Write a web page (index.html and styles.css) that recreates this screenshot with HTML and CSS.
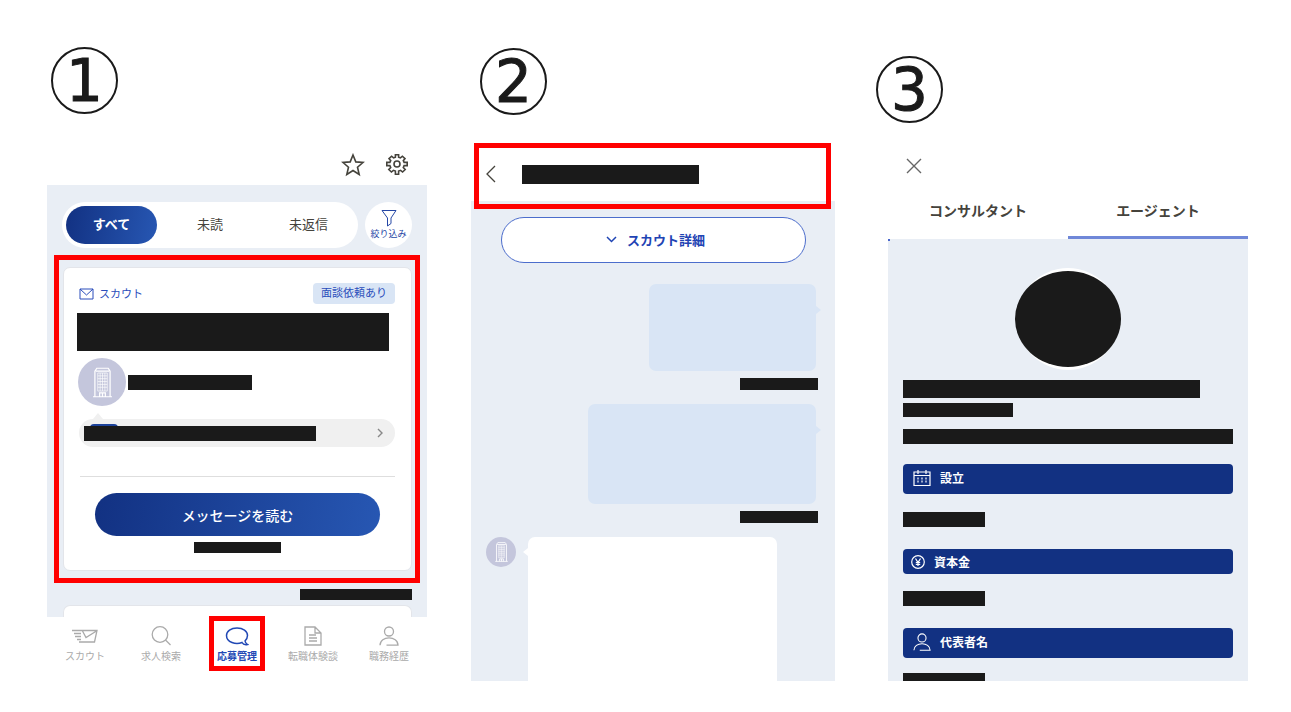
FILE: index.html
```html
<!DOCTYPE html>
<html lang="ja">
<head>
<meta charset="utf-8">
<meta name="viewport" content="width=device-width, initial-scale=1">
<title>応募管理</title>
<link rel="stylesheet" href="styles.css">
</head>
<body>
<svg class="defs" aria-hidden="true">
  <symbol id="building" viewBox="0 0 20 32">
    <path d="M2 31V4l2-3h12l2 3v27M0 31h20M3 4h14M7 31v-4h6v4M10 27v4" fill="none" stroke="#fff" stroke-width="1.300"/>
    <path d="M5 6v19M7.500 6v19M10 6v19M12.500 6v19M15 6v19M5 6h10M5 9h10M5 12h10M5 15h10M5 18h10M5 21h10M5 25h10" fill="none" stroke="#fff" stroke-width=".7"/>
  </symbol>
  <symbol id="person" viewBox="0 0 20 20">
    <circle cx="10" cy="5.500" r="4.500"/>
    <path d="M1 19.300C1 9.500 19 9.500 19 19.200H7.500"/>
  </symbol>
</svg>
<main class="steps">
  <section class="step step-list">
    <div class="number">1</div>
    <div class="toolbar">
      <button class="icon-button" aria-label="お気に入り"><svg width="24" height="24" viewBox="0 0 24 24"><path d="m12 2 2.800 6.900 7.200.6-5.500 4.700 1.700 7.300-6.200-4-6.200 4 1.700-7.300L2 9.500l7.200-.6z"/></svg></button>
      <button class="icon-button" aria-label="設定"><svg width="24" height="24" viewBox="0 0 24 24"><path d="M10.400 4.200V1.700h3.200v2.500l1.800.7 2-1.700 2.600 2.400-1.700 2.100.8 1.700h3.100v3.200h-3.100l-.8 1.900 1.900 2-2.600 2.500-2-1.700-2 .8v3.200h-3.200v-3.200l-2-.8-2 1.700-2.600-2.500 1.900-2-.8-1.900H1.800V9.400h3.100l.8-1.700L4 5.600l2.600-2.400 2 1.700z"/><circle cx="12" cy="11" r="3"/></svg></button>
    </div>
    <div class="list-body">
      <div class="filters">
        <div class="segments">
          <button class="segment segment-on">すべて</button>
          <button class="segment">未読</button>
          <button class="segment">未返信</button>
        </div>
        <button class="narrow"><svg width="18" height="18" viewBox="0 0 18 18"><path d="M2 1.500h14L11 9v5.500L7.500 17V9z"/></svg>絞り込み</button>
      </div>
      <div class="marked">
        <article class="card">
          <div class="card-head">
            <span class="kind"><svg width="15" height="12" viewBox="0 0 15 12"><path d="M1 1h13v10H1zM1 1l6.500 6L14 1"/></svg>スカウト</span>
            <span class="tag">面談依頼あり</span>
          </div>
          <div class="mask mask-title"></div>
          <div class="company">
            <span class="avatar avatar-large"><svg width="19" height="31"><use href="#building"/></svg></span>
            <span class="mask mask-name"></span>
          </div>
          <div class="preview">
            <span class="mask mask-preview"></span>
            <svg width="6" height="10" viewBox="0 0 6 10"><path d="m1 1 4 4-4 4"/></svg>
          </div>
          <button class="read">メッセージを読む</button>
          <div class="mask mask-date"></div>
        </article>
      </div>
      <div class="mask mask-stamp"></div>
      <div class="card-next"></div>
    </div>
    <nav class="tabs">
      <a class="tab" href="#"><svg width="28" height="20" viewBox="0 0 28 20"><path d="M10 4.500h16L23.500 16H8M11.500 5l3.500 6.500L25.500 5M1 4.500h9M3 7.500h7M4 10.500h6M6 13.500h4"/></svg>スカウト</a>
      <a class="tab" href="#"><svg width="20" height="20" viewBox="0 0 20 20"><circle cx="9" cy="8.500" r="7.800"/><path d="m14.500 14 5 5"/></svg>求人検索</a>
      <a class="tab tab-on" href="#"><svg width="24" height="20" viewBox="0 0 24 20"><path d="M17 16.500C11 19 1.500 16.500 1.500 9.500 1.500 5 6 2 12 2s10.500 3 10.500 7.500c0 2.500-1 4-2.500 5.500.2 1.500 1 2.500 2.500 3.500-2.500.5-4.500-.2-5.500-2z"/></svg>応募管理</a>
      <a class="tab" href="#"><svg width="18" height="20" viewBox="0 0 18 20"><path d="M1 1h10l6 6v12H1zM11 1v6h6M5 9h7M5 12h8M5 15h8"/></svg>転職体験談</a>
      <a class="tab" href="#"><svg width="20" height="20"><use href="#person"/></svg>職務経歴</a>
    </nav>
  </section>

  <section class="step step-chat">
    <div class="number">2</div>
    <header class="chat-head">
      <button class="icon-button" aria-label="戻る"><svg width="10" height="18" viewBox="0 0 10 18"><path d="M9 1 1 9l8 8"/></svg></button>
      <span class="mask mask-partner"></span>
    </header>
    <div class="chat-body">
      <button class="detail"><svg width="11" height="7" viewBox="0 0 11 7"><path d="m1 1 4.500 4.500L10 1"/></svg>スカウト詳細</button>
      <div class="bubble bubble-sent bubble-short"></div>
      <div class="mask mask-time"></div>
      <div class="bubble bubble-sent bubble-long"></div>
      <div class="mask mask-time"></div>
      <div class="received">
        <span class="avatar"><svg width="13" height="20"><use href="#building"/></svg></span>
        <div class="bubble bubble-received"></div>
      </div>
    </div>
  </section>

  <section class="step step-agent">
    <div class="number">3</div>
    <div class="agent-close"><button class="icon-button" aria-label="閉じる"><svg width="16" height="16" viewBox="0 0 16 16"><path d="m1 1 14 14M15 1 1 15"/></svg></button></div>
    <div class="agent-tabs">
      <button class="agent-tab">コンサルタント</button>
      <button class="agent-tab agent-tab-on">エージェント</button>
    </div>
    <div class="agent-body">
      <div class="portrait"><div class="portrait-mask"></div></div>
      <div class="mask mask-heading"></div>
      <div class="mask mask-subheading"></div>
      <div class="mask mask-intro"></div>
      <h2 class="fact"><svg width="18" height="18" viewBox="0 0 18 18"><path d="M1 3h16v13.500H1zM1 6.500h16M5 1v4M13 1v4"/><path d="M5 8.500v6M9 8.500v6M13 8.500v6" stroke-dasharray="2 1"/></svg>設立</h2>
      <div class="mask mask-fact"></div>
      <h2 class="fact fact-slim"><svg width="14" height="14" viewBox="0 0 14 14"><circle cx="7" cy="7" r="6.300"/><path d="m4.500 3.500 2.500 4 2.500-4M7 7.500V11M4.800 7.500h4.400M4.800 9.300h4.400"/></svg>資本金</h2>
      <div class="mask mask-fact"></div>
      <h2 class="fact"><svg width="18" height="18"><use href="#person"/></svg>代表者名</h2>
      <div class="mask mask-fact mask-cut"></div>
    </div>
  </section>
</main>
</body>
</html>
```
FILE: styles.css
```css
* { box-sizing: border-box; }

body {
  margin: 0;
  background: #fff;
  color: #45433c;
  font-family: "Noto Sans CJK JP", sans-serif;
  font-size: 13px;
  line-height: 1;
}

button {
  margin: 0;
  padding: 0;
  border: 0;
  background: none;
  color: inherit;
  font: inherit;
}

a { color: inherit; text-decoration: none; }

svg {
  flex: none;
  fill: none;
  stroke: currentColor;
}

.defs { position: absolute; width: 0; height: 0; }

.steps {
  display: grid;
  grid-template-columns: 380fr 367fr 372fr;
  gap: 41px;
  padding: 0 43px 31px 47px;
}

.step {
  display: flex;
  flex-direction: column;
  min-width: 0;
}
.step-list { padding-top: 47px; }
.step-chat { padding: 48px 0 0 3px; }
.step-agent { padding: 56px 0 0 12px; }

.number {
  display: flex;
  align-items: center;
  justify-content: center;
  width: 67px;
  height: 67px;
  margin-left: 4px;
  border: 2px solid #1a1a1a;
  border-radius: 50%;
  color: #1a1a1a;
  font: 58px/1 "DejaVu Sans", sans-serif;
  -webkit-text-stroke: 1px #1a1a1a;
}
.step-chat .number { margin-left: 9px; }
.step-agent .number { margin-left: -12px; }

.icon-button { display: flex; }

.mask { background: #1a1a1a; }

.avatar {
  display: flex;
  flex: none;
  align-items: center;
  justify-content: center;
  width: 30px;
  height: 30px;
  border-radius: 50%;
  background: #c4c6dc;
}
.avatar-large { width: 48px; height: 48px; }

/* Message list */
.toolbar {
  display: flex;
  justify-content: flex-end;
  gap: 20px;
  padding: 39px 18px 8px;
}
.toolbar svg { stroke-width: 1.600; }

.list-body {
  padding: 17px 7px 0;
  background: #e9eef5;
}

.filters {
  display: flex;
  align-items: center;
  gap: 7px;
  padding: 0 8px;
}

.segments {
  display: grid;
  flex: 1;
  grid-template-columns: 91fr 106fr 91fr;
  padding: 4px;
  border-radius: 23px;
  background: #fff;
}

.segment { height: 38px; padding-bottom: 3px; border-radius: 19px; }
.segment-on {
  background: linear-gradient(100deg, #123182, #2757b3);
  color: #fff;
  font-weight: 700;
}

.narrow {
  display: flex;
  flex-direction: column;
  align-items: center;
  justify-content: center;
  gap: 2px;
  width: 47px;
  height: 46px;
  padding-bottom: 4px;
  border-radius: 50%;
  background: #fff;
  color: #2446a5;
  font-size: 9px;
}

.marked {
  margin-top: 7px;
  padding: 7px 3px 7px 4px;
  border: 5px solid #f00;
}

.card {
  padding: 15px 16px 17px;
  border: 1px solid #e3e5ea;
  border-radius: 7px;
  background: #fff;
}

.card-head {
  display: flex;
  align-items: center;
  justify-content: space-between;
  margin-left: -1px;
  color: #2a4dbb;
  font-size: 11px;
}
.kind { display: flex; align-items: center; gap: 5px; }
.tag {
  padding: 4px 8px 6px;
  border-radius: 4px;
  background: #d9e5f5;
}

.mask-title {
  height: 38px;
  margin: 9px 6px 0 -3px;
}

.company {
  display: flex;
  align-items: center;
  gap: 2px;
  margin: 7px 0 0 -2px;
}
.mask-name { width: 124px; height: 15px; }

.preview {
  position: relative;
  display: flex;
  align-items: center;
  justify-content: space-between;
  height: 28px;
  margin: 13px 0 0 -1px;
  padding: 0 12px 0 5px;
  border-radius: 14px;
  background: #f0f0f0;
  color: #888;
}
.preview::before {
  content: "";
  position: absolute;
  top: -6px;
  left: 14px;
  border: 5px solid transparent;
  border-top: 0;
  border-bottom: 6px solid #f0f0f0;
}
.preview::after {
  content: "";
  position: absolute;
  top: 5px;
  left: 11px;
  width: 28px;
  height: 4px;
  border-radius: 4px 4px 0 0;
  background: #1d439b;
}
.preview svg { stroke-width: 1.400; }
.mask-preview {
  z-index: 1;
  width: 232px;
  height: 15px;
}

.read {
  position: relative;
  display: block;
  width: calc(100% - 30px);
  height: 43px;
  margin: 46px auto 0;
  border-radius: 22px;
  background: linear-gradient(100deg, #123182, #2757b3);
  color: #fff;
  font-size: 14px;
  font-weight: 500;
}
.read::before {
  content: "";
  position: absolute;
  top: -17px;
  right: -15px;
  left: -15px;
  border-top: 1px solid #dedede;
}

.mask-date { width: 87px; height: 11px; margin: 6px auto 0; }
.mask-stamp { width: 112px; height: 11px; margin: 6px 8px 0 auto; }

.card-next {
  height: 12px;
  margin: 5px 8px 0 9px;
  border: 1px solid #e3e5ea;
  border-bottom: 0;
  border-radius: 7px 7px 0 0;
  background: #fff;
}

.tabs {
  display: grid;
  grid-template-columns: repeat(5, 1fr);
}

.tab {
  position: relative;
  display: flex;
  flex-direction: column;
  align-items: center;
  gap: 4px;
  padding: 9px 0 19px;
  color: #aaa;
  font-size: 10px;
  line-height: 12px;
  white-space: nowrap;
}
.tab svg { stroke-width: 1.300; }
.tab-on { color: #2148b5; font-weight: 700; }
.tab-on svg { stroke-width: 1.500; }
.tab-on::after {
  content: "";
  position: absolute;
  inset: -1px 10px 10px;
  border: 5px solid #f00;
}

/* Conversation */
.chat-head {
  position: relative;
  display: flex;
  align-items: center;
  gap: 26px;
  height: 58px;
  margin-top: 28px;
  padding: 4px 15px 0;
}
.chat-head svg { stroke-width: 1.300; }
.chat-head::after {
  content: "";
  position: absolute;
  inset: 0 4px -8px 3px;
  border: 5px solid #f00;
}
.mask-partner { width: 177px; height: 19px; }

.chat-body {
  display: flex;
  flex: 1;
  flex-direction: column;
  padding: 16px 14px 0 15px;
  background: #e9eef5;
}

.detail {
  display: flex;
  align-items: center;
  justify-content: center;
  gap: 10px;
  height: 46px;
  margin: 0 15px;
  padding: 0 0 2px 4px;
  border: 1px solid #4c6dcc;
  border-radius: 23px;
  background: #fff;
  color: #1f44b4;
  font-weight: 700;
}
.detail svg { stroke-width: 1.500; }

.bubble {
  position: relative;
  border-radius: 7px;
}
.bubble::before {
  content: "";
  position: absolute;
  border: 4px solid transparent;
}
.bubble-sent {
  align-self: flex-end;
  margin-right: 5px;
  background: #d9e5f5;
}
.bubble-sent::before {
  top: 22px;
  left: 100%;
  border-right: 0;
  border-left: 5px solid #d9e5f5;
}
.bubble-short { width: 50%; height: 87px; margin-top: 21px; }
.bubble-long { width: 68%; height: 100px; margin-top: 14px; }
.mask-time {
  width: 78px;
  height: 12px;
  margin: 7px 3px 0 auto;
}

.received {
  display: flex;
  flex: 1;
  gap: 12px;
  margin-top: 14px;
  padding-right: 44px;
}
.bubble-received {
  flex: 1;
  border-radius: 7px 7px 0 0;
  background: #fff;
}
.bubble-received::before {
  top: 11px;
  right: 100%;
  border-right: 5px solid #fff;
  border-left: 0;
}

/* Agent profile */
.agent-close {
  display: flex;
  padding: 35px 18px 0;
  color: #666;
}
.agent-close svg { stroke-width: 1.400; }

.agent-tabs {
  display: grid;
  grid-template-columns: 1fr 1fr;
  margin-top: 13px;
}
.agent-tab {
  height: 52px;
  padding-bottom: 4px;
  border-bottom: 3px solid transparent;
  font-size: 14px;
  font-weight: 700;
}
.agent-tab-on { border-color: #6f87d8; }

.agent-body {
  position: relative;
  flex: 1;
  padding: 29px 15px 0;
  background: #e9eef5;
}
.agent-body::before {
  content: "";
  position: absolute;
  top: 0;
  left: 0;
  width: 2px;
  height: 2px;
  background: #4866cc;
}

.portrait {
  display: flex;
  align-items: center;
  justify-content: center;
  width: 102px;
  height: 102px;
  margin: 0 auto;
  border-radius: 50%;
  background: #fff;
}
.portrait-mask {
  flex: none;
  width: 106px;
  height: 96px;
  border-radius: 50%;
  background: #1a1a1a;
}

.mask-heading { width: 90%; height: 18px; margin-top: 10px; }
.mask-subheading { width: 110px; height: 14px; margin-top: 5px; }
.mask-intro { height: 15px; margin-top: 12px; }

.fact {
  display: flex;
  align-items: center;
  gap: 9px;
  height: 30px;
  margin: 20px 0 0;
  padding: 0 10px 2px;
  border-radius: 4px;
  background: #123182;
  color: #fff;
  font-size: 12px;
  font-weight: 700;
}
.fact svg { stroke-width: 1.200; }
.fact-slim {
  height: 25px;
  padding: 0 8px;
}
.mask-fact { width: 82px; height: 15px; margin-top: 18px; }
.mask-fact + .fact { margin-top: 22px; }
.fact-slim + .mask-fact { margin-top: 17px; }
.mask-fact.mask-cut { height: 8px; margin-top: 15px; }
```
